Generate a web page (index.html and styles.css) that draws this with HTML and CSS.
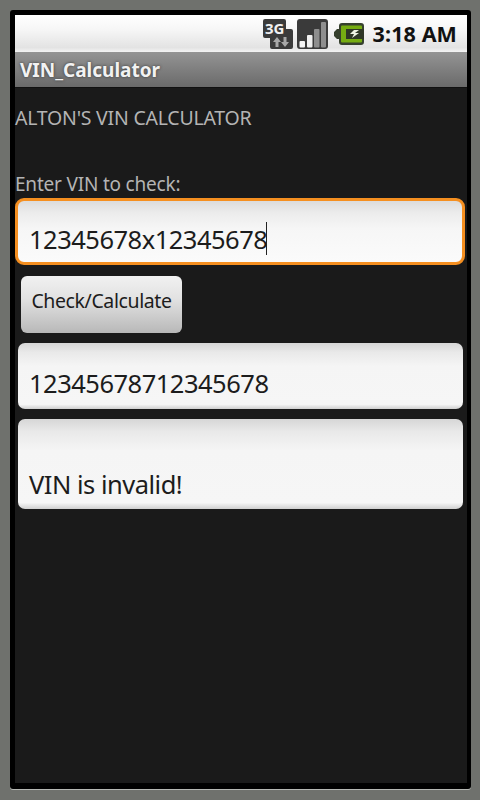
FILE: index.html
```html
<!DOCTYPE html>
<html lang="en">
<head>
<meta charset="utf-8">
<title>VIN_Calculator</title>
<link rel="stylesheet" href="styles.css">
</head>
<body>
<div class="bezel">
  <div class="screen">
    <div class="status">
      <svg class="ic-3g" viewBox="0 0 30 30" width="30" height="30">
        <path d="M0 2a2 2 0 0 1 2-2h19a2 2 0 0 1 2 2v8h5a2 2 0 0 1 2 2v16a2 2 0 0 1-2 2H9a2 2 0 0 1-2-2v-9H2a2 2 0 0 1-2-2z" fill="#3b3b3b"/>
        <text x="2" y="14.500" class="g3">3G</text>
        <path d="M12.500 28v-5H10l4-5 4 5h-2.500v5zM20.500 18v5H18l4 5 4-5h-2.500v-5z" fill="#a8a8a8"/>
      </svg>
      <svg class="ic-sig" viewBox="0 0 31 30" width="31" height="30">
        <rect x="0" y="0" width="31" height="30" rx="3" fill="#3a3a3a"/>
        <rect x="2.500" y="22" width="5.500" height="6.500" rx="1" fill="#f4f4f4"/>
        <rect x="10" y="16" width="5.500" height="12.500" rx="1" fill="#f0f0f0"/>
        <rect x="17" y="10" width="5.500" height="18.500" rx="1" fill="#8e8e8e"/>
        <rect x="24" y="3" width="5" height="25.500" rx="1" fill="#8e8e8e"/>
      </svg>
      <svg class="ic-bat" viewBox="0 0 30 22" width="30" height="22">
        <path d="M0 9l3-3h2V3a3 3 0 0 1 3-3h19a3 3 0 0 1 3 3v16a3 3 0 0 1-3 3H8a3 3 0 0 1-3-3v-3H3l-3-3z" fill="#36402e"/>
        <rect x="7" y="2.500" width="21" height="17" rx="1" fill="#76ad12"/>
        <rect x="12" y="6" width="18" height="10" fill="#2f3727"/>
        <path d="M25 7h-5l-4 4h4l-2 4 7-5h-4z" fill="#eef3e4"/>
      </svg>
      <span class="clock">3:18 AM</span>
    </div>
    <div class="titlebar">VIN_Calculator</div>
    <main class="content">
      <p class="heading">ALTON'S VIN CALCULATOR</p>
      <p class="label">Enter VIN to check:</p>
      <div class="field focused"><span class="value">12345678x12345678</span><span class="caret"></span></div>
      <button class="btn" type="button">Check/Calculate</button>
      <div class="field result"><span class="value">12345678712345678</span></div>
      <div class="field message"><span class="value">VIN is invalid!</span></div>
    </main>
  </div>
</div>
</body>
</html>
```
FILE: styles.css
```css
* { box-sizing: border-box; }
html, body { margin: 0; height: 800px; overflow: hidden; }
body {
  background: #6f716d;
  padding: 10px 9px 10px 10px;
  font-family: "Noto Sans", "Open Sans", sans-serif;
}
.bezel {
  height: 779px;
  background: #000;
  padding: 5px 4px 6px 5px;
  border-radius: 3px;
  box-shadow: 0 1px 0 #b5b7b3;
}
.screen {
  height: 768px;
  display: flex;
  flex-direction: column;
  background: #1a1a1a;
}
.status {
  height: 37px;
  flex: none;
  display: flex;
  align-items: center;
  justify-content: flex-end;
  padding-right: 10px;
  background: linear-gradient(#ffffff 0, #f6f6f6 40%, #e3e3e3 88%, #f3f3f3 100%);
}
.ic-3g { margin-right: 4px; }
.ic-sig { margin-right: 6px; }
.ic-bat { margin-right: 9px; }
.g3 { font: 700 15px "Noto Sans", sans-serif; fill: #f2f2f2; }
.clock { font-size: 21.500px; font-weight: 700; color: #111; line-height: 37px; letter-spacing: 0.100px; }
.titlebar {
  height: 36px;
  flex: none;
  padding-left: 5px;
  font-size: 19px;
  line-height: 37px;
  font-weight: 700;
  color: #f2f2f2;
  text-shadow: 0 0 3px #333;
  background: linear-gradient(#949494, #6a6a6a);
  border-bottom: 1px solid #111;
}
.content {
  flex: 1;
  display: flex;
  flex-direction: column;
  align-items: stretch;
  padding: 0 2px 0 0;
}
.heading, .label {
  margin: 0;
  color: #b4b4b4;
  font-size: 19.500px;
  letter-spacing: -0.230px;
  white-space: nowrap;
}
.heading { line-height: 26px; padding-top: 17px; height: 43px; }
.label { line-height: 26px; margin-top: 40px; height: 27px; letter-spacing: -0.200px; font-size: 19px; }
.field {
  margin: 0 2px 0 3px;
  display: flex;
  border-radius: 7px;
  padding-left: 11px;
  background: linear-gradient(#d6d6d6 0, #e9e9e9 14%, #f5f5f5 35%, #f6f6f6 93%, #cfcfcf 100%);
  color: #1c1c1c;
  font-size: 25.500px;
  letter-spacing: -0.500px;
  white-space: nowrap;
}
.focused {
  height: 67px;
  margin: 0;
  padding-left: 11px;
  padding-top: 21px;
  align-items: stretch;
  border: 3px solid #f58f20;
  border-radius: 9px;
  background: linear-gradient(#dcdcdc 0, #ececec 20%, #f6f6f6 45%, #fbfbfb 100%);
}
.value { line-height: 34px; }
.caret {
  width: 1px;
  height: 33px;
  margin-left: -1px;
  background: #222;
}
.btn {
  width: 161px;
  height: 57px;
  margin: 11px 0 0 6px;
  padding: 0 0 8px;
  border: 0;
  border-radius: 6px;
  background: linear-gradient(#f1f1f1 0, #e2e2e2 40%, #b8b8b8 100%);
  color: #1c1c1c;
  font-family: inherit;
  font-size: 19.500px;
  letter-spacing: -0.400px;
  text-align: center;
}
.result {
  height: 66px;
  margin-top: 10px;
  align-items: flex-end;
  padding-bottom: 9px;
}
.message {
  height: 90px;
  margin-top: 10px;
  align-items: flex-end;
  padding-bottom: 8px;
}
```
